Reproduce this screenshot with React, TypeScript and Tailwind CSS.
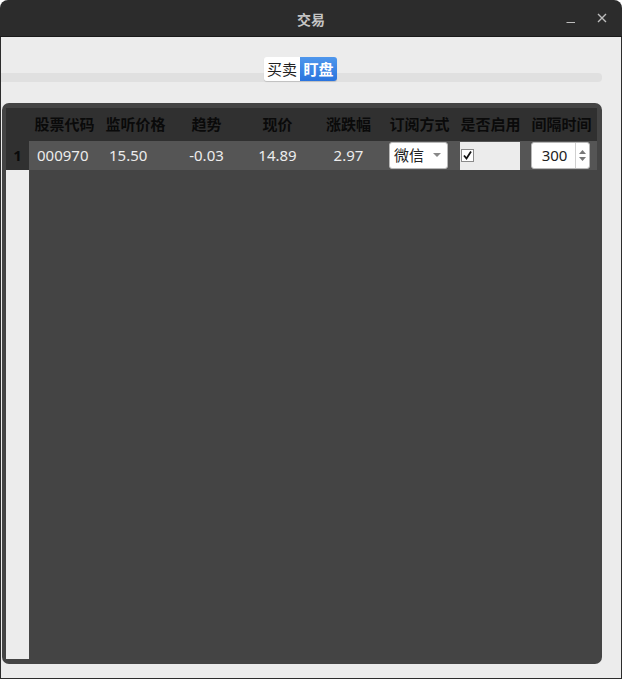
import React from "react";

const font = { fontFamily: '"Noto Sans", "Noto Sans CJK SC", sans-serif' };

const headers = ["股票代码", "监听价格", "趋势", "现价", "涨跌幅", "订阅方式", "是否启用", "间隔时间"];

export default function App() {
  return (
    <div className="w-[622px] h-[679px] bg-[#2c2c2c] rounded-t-[8px] flex flex-col overflow-hidden" style={font}>
      {/* title bar */}
      <div className="h-[37px] shrink-0 relative flex items-center justify-center border-b border-[#1a1a1a]">
        <span className="text-[14px] font-bold text-[#c4c4c4] pt-[2px]">交易</span>
        <div className="absolute right-[14px] top-[11px] flex items-center gap-[19px] text-[#bdbdbd]">
          <svg width="11" height="16" viewBox="0 0 11 16"><line x1="0.5" y1="11.5" x2="9" y2="11.5" stroke="#bdbdbd" strokeWidth="1.2" /></svg>
          <svg width="12" height="16" viewBox="0 0 12 16"><path d="M2 3 L10 11 M10 3 L2 11" stroke="#bdbdbd" strokeWidth="1.4" /></svg>
        </div>
      </div>
      {/* body */}
      <div className="flex-1 mx-[1px] mb-[1px] bg-[#ececec] flex flex-col">
        {/* tab bar */}
        <div className="relative h-[65px] shrink-0">
          <div className="absolute left-0 top-[36px] w-[601px] h-[9px] bg-[#e0e0e0] rounded-r-[4px]" />
          <div className="absolute left-[263px] top-[20px] flex h-[24px] rounded-[3px] overflow-hidden shadow-[0_1px_1px_rgba(0,0,0,0.15)]">
            <div className="w-[36px] bg-white text-[#222] text-[15px] flex items-center justify-center leading-none">买卖</div>
            <div className="w-[37px] bg-gradient-to-b from-[#4f97ec] to-[#2a74de] text-white text-[15px] font-bold flex items-center justify-center leading-none">盯盘</div>
          </div>
        </div>
        {/* table panel */}
        <div className="ml-[1px] w-[600px] h-[561px] mt-[1px] bg-[#444444] rounded-[7px] pt-[5px] pl-[4px] pr-[5px] pb-[5px] flex flex-col">
          <div className="flex flex-col h-full">
            {/* header */}
            <div className="flex h-[33px] shrink-0 bg-[#303030]">
              <div className="w-[23px]" />
              {headers.map((h) => (
                <div key={h} className="w-[71px] flex items-center justify-center text-[15px] font-bold text-[#0a0a0a]">{h}</div>
              ))}
            </div>
            {/* row */}
            <div className="flex h-[29px] shrink-0">
              <div className="w-[23px] bg-[#303030] flex items-center justify-center text-[15px] font-bold text-[#0a0a0a]">1</div>
              <div className="flex flex-1 bg-[#555555] text-[15px] text-[#ececec]">
                <div className="w-[71px] flex items-center pl-[8px]">000970</div>
                <div className="w-[71px] flex items-center pl-[9px]">15.50</div>
                <div className="w-[71px] flex items-center justify-center">-0.03</div>
                <div className="w-[71px] flex items-center justify-center">14.89</div>
                <div className="w-[71px] flex items-center justify-center">2.97</div>
                <div className="w-[71px] flex items-center pl-[5px]">
                  <div className="w-[59px] h-[27px] bg-white border border-[#b8b8b8] rounded-[3px] flex items-center pl-[4px] text-[#222]">
                    <span className="text-[15px]">微信</span>
                    <svg className="ml-[9px]" width="8" height="5" viewBox="0 0 8 5"><path d="M0 0 H8 L4 4 Z" fill="#888" /></svg>
                  </div>
                </div>
                <div className="w-[71px] flex items-center pl-[5px]">
                  <div className="w-[60px] h-[28px] bg-[#ececec] flex items-center pl-[1px]">
                    <div className="w-[13px] h-[13px] border border-[#8a8a8a] bg-white flex items-center justify-center">
                      <svg width="11" height="11" viewBox="0 0 11 11"><path d="M2 5.5 L4.5 8.5 L9 1.5" stroke="#111" strokeWidth="1.8" fill="none" /></svg>
                    </div>
                  </div>
                </div>
                <div className="w-[71px] flex items-center pl-[5px]">
                  <div className="w-[59px] h-[27px] bg-white border border-[#b8b8b8] rounded-[3px] flex items-center text-[#222]">
                    <span className="flex-1 text-center text-[15px] pl-[2px]">300</span>
                    <div className="w-[14px] h-full border-l border-[#d0d0d0] flex flex-col items-center justify-center gap-[3px]">
                      <svg width="7" height="4" viewBox="0 0 7 4"><path d="M0 4 L3.5 0 L7 4 Z" fill="#777" /></svg>
                      <svg width="7" height="4" viewBox="0 0 7 4"><path d="M0 0 L3.5 4 L7 0 Z" fill="#777" /></svg>
                    </div>
                  </div>
                </div>
              </div>
            </div>
            {/* empty area */}
            <div className="flex flex-1">
              <div className="w-[23px] bg-[#ececec]" />
              <div className="flex-1" />
            </div>
          </div>
        </div>
      </div>
    </div>
  );
}
